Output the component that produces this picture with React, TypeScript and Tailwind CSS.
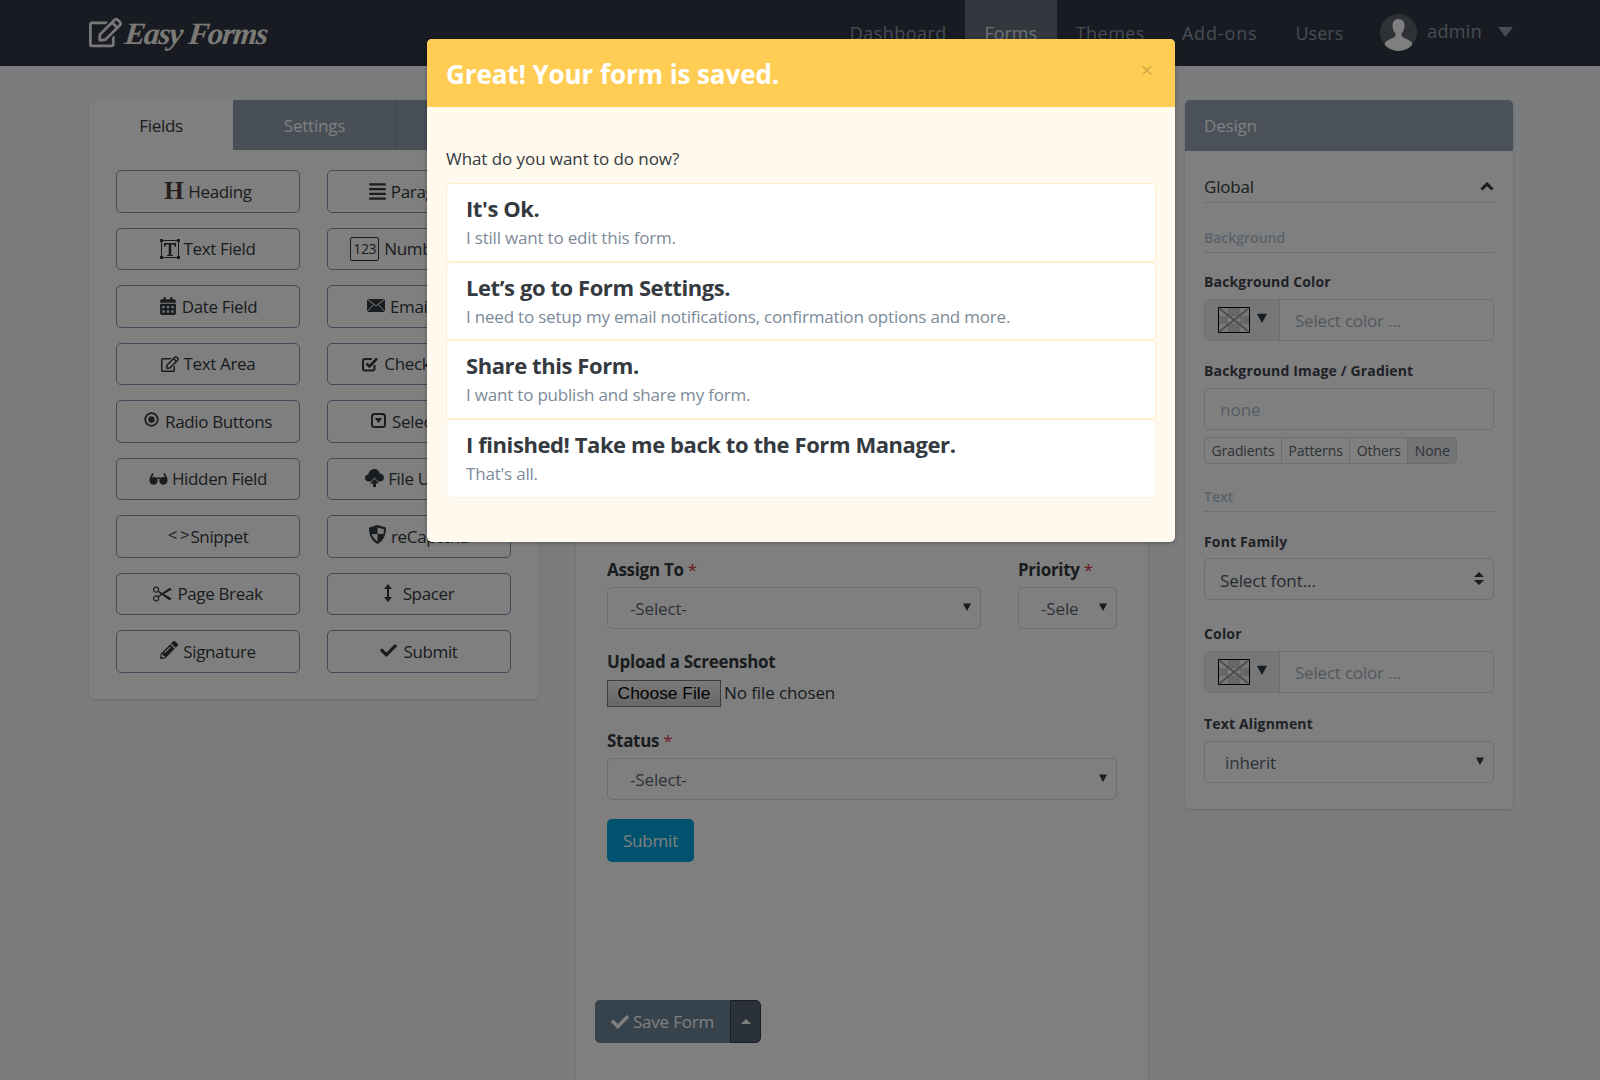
import React from "react";
import {
  FaAlignJustify, FaCalendarAlt, FaRegEdit, FaPencilAlt, FaCheck,
} from "react-icons/fa";
import { BsScissors } from "react-icons/bs";

const TextFieldIcon = () => (
  <svg width="20" height="20" viewBox="0 0 20 20" className="mr-[3px]">
    <rect x="1.5" y="1.5" width="17" height="17" fill="none" stroke="#343a40" strokeWidth="1" />
    <path d="M4 4h12v4h-1.2c-.2-1.6-.8-2.4-2.3-2.4h-1.2v9.4c0 .7.4 1 1.7 1V17H7v-1c1.300 0 1.700-.300 1.700-1V5.600H7.500C6 5.600 5.400 6.400 5.200 8H4z" fill="#343a40" />
    <rect x="0" y="0" width="3" height="3" fill="#343a40" /><rect x="17" y="0" width="3" height="3" fill="#343a40" />
    <rect x="0" y="17" width="3" height="3" fill="#343a40" /><rect x="17" y="17" width="3" height="3" fill="#343a40" />
  </svg>
);

const GlassesIcon = () => (
  <svg width="19" height="13" viewBox="0 0 19 13" className="mr-[4px]">
    <path d="M4 1.500 1 7 M15 1.500 18 7" stroke="#343a40" strokeWidth="1.600" fill="none" />
    <path d="M0.500 8.500c0-2.500 1.800-3.500 4.200-3.500s4 1 4 3.500-1.700 4.200-4 4.200-4.200-1.700-4.200-4.200zM10.300 8.500c0-2.500 1.600-3.500 4-3.500s4.200 1 4.200 3.500-1.900 4.200-4.200 4.200-4-1.700-4-4.200z" fill="#343a40" />
    <path d="M8 6.500c1-.7 2-.7 3 0" stroke="#343a40" strokeWidth="1.500" fill="none" />
  </svg>
);

const ShieldIcon = () => (
  <svg width="17" height="19" viewBox="0 0 17 19" className="mr-[5px] -mt-[3px]">
    <path d="M8.500 0 17 2.500c0 7-2 13-8.500 16.500C2 15.500 0 9.500 0 2.500z" fill="#343a40" />
    <path d="M8.500 2.500v6.500h6c.2-1 .4-2.500.4-4.700zM8.500 9H2.700c.7 2.800 2.500 5.200 5.800 7.400z" fill="#f4f5f6" />
  </svg>
);

const MailIcon = () => (
  <svg width="18" height="13" viewBox="0 0 18 13" className="mr-[5px] -mt-[1px]">
    <rect width="18" height="13" fill="#343a40" />
    <path d="M0 0l9 7 9-7M0 13l6.500-7.500M18 13l-6.500-7.500" stroke="#f4f5f6" strokeWidth="1" fill="none" />
  </svg>
);

const CheckIcon = () => (
  <svg width="17" height="16" viewBox="0 0 17 16" className="mr-[5px]">
    <path d="M12.500 9v3.500a2 2 0 0 1-2 2H3a2 2 0 0 1-2-2V5a2 2 0 0 1 2-2h7" fill="none" stroke="#343a40" strokeWidth="2" />
    <path d="M4.500 7.500 7.500 10.500 15 2.500" fill="none" stroke="#343a40" strokeWidth="2.600" />
  </svg>
);

const SelectIcon = () => (
  <svg width="15" height="15" viewBox="0 0 15 15" className="mr-[6px] -mt-[2px]">
    <rect x="1" y="1" width="13" height="13" rx="2.500" fill="none" stroke="#343a40" strokeWidth="2" />
    <path d="M3.800 5h7.400L7.500 10z" fill="#343a40" />
  </svg>
);

const RadioIcon = () => (
  <svg width="15" height="15" viewBox="0 0 15 15" className="mr-[6px] -mt-[3px]">
    <circle cx="7.500" cy="7.500" r="6.300" fill="none" stroke="#343a40" strokeWidth="1.800" />
    <circle cx="7.500" cy="7.500" r="3.200" fill="#343a40" />
  </svg>
);

const CloudIcon = () => (
  <svg width="19" height="18" viewBox="0 0 19 18" className="mr-[4px] -mt-[1px]">
    <path d="M4 12.500c-2.400 0-4-1.500-4-3.500 0-1.900 1.400-3.300 3.200-3.400C3.800 2.400 6.200 0 9.300 0c2.800 0 5 1.900 5.600 4.500 2.300.2 4.100 1.900 4.100 4.200 0 2.200-1.700 3.800-4 3.800H13L9.500 8.500 6 12.500z" fill="#343a40" />
    <path d="M9.500 9.500 14 14.500h-3V18H8v-3.500H5z" fill="#343a40" />
  </svg>
);

const SpacerIcon = () => (
  <svg width="8" height="18" viewBox="0 0 8 18" className="mr-[11px] -mt-[2px]">
    <path d="M4 0l4 5H5v8h3l-4 5-4-5h3V5H0z" fill="#343a40" />
  </svg>
);

const tools: [React.ReactNode, string][] = [
  [<span className="font-['Liberation_Serif',serif] font-bold text-[25px] leading-none mr-[5px] -mt-[2px] text-[#4a3f38]">H</span>, "Heading"],
  [<FaAlignJustify className="text-[19px] mr-[4px]" />, "Paragraph"],
  [<TextFieldIcon />, "Text Field"],
  [<span className="border border-[#343a40] rounded-[2px] w-[29px] h-[24px] flex items-center justify-center text-[14px] mr-[5px]">123</span>, "Number Field"],
  [<FaCalendarAlt className="text-[18px] mr-[5px]" />, "Date Field"],
  [<MailIcon />, "Email Field"],
  [<FaRegEdit className="text-[18px] mr-[5px]" />, "Text Area"],
  [<CheckIcon />, "Checkboxes"],
  [<RadioIcon />, "Radio Buttons"],
  [<SelectIcon />, "Select List"],
  [<GlassesIcon />, "Hidden Field"],
  [<CloudIcon />, "File Upload"],
  [<span className="text-[17px] leading-none flex gap-[3px] -mt-[3px] mr-[1px]"><span>&lt;</span><span>&gt;</span></span>, "Snippet"],
  [<ShieldIcon />, "reCaptcha"],
  [<BsScissors className="text-[20px] mr-[4px] rotate-90" />, "Page Break"],
  [<SpacerIcon />, "Spacer"],
  [<FaPencilAlt className="text-[18px] mr-[5px] -mt-[2px]" />, "Signature"],
  [<FaCheck className="text-[17px] mr-[6px] -mt-[1px]" />, "Submit"],
];

const Swatch = () => (
  <svg width="32" height="26" viewBox="0 0 32 26" className="block">
    <rect x="0.500" y="0.500" width="31" height="25" fill="#f2f2f2" stroke="#000" />
    <rect x="1" y="9" width="9" height="8" fill="#cfcfcf" /><rect x="22" y="9" width="9" height="8" fill="#cfcfcf" />
    <rect x="10" y="1" width="12" height="8" fill="#cfcfcf" /><rect x="10" y="17" width="12" height="8" fill="#cfcfcf" />
    <path d="M2 2 30 24M30 2 2 24" stroke="#9a9a9a" strokeWidth="2" />
  </svg>
);

const Caret = ({ className = "" }: { className?: string }) => (
  <svg width="8" height="8" viewBox="0 0 8 8" className={className}><path d="M0 0.500h8L4 8z" fill="#343a40" /></svg>
);

const Label = ({ children, req }: { children: React.ReactNode; req?: boolean }) => (
  <div className="text-[17px] font-bold leading-[24px] text-[#343a40] tracking-[-0.3px]">
    {children}{req && <span className="text-[#dc3545] font-normal"> *</span>}
  </div>
);

const SmallLabel = ({ children }: { children: React.ReactNode }) => (
  <div className="text-[14px] font-bold leading-[20px] text-[#3e444e] tracking-[0.15px]">{children}</div>
);

const SelectBox = ({ text, className = "", textClass = "pl-[22px]" }: { text: string; className?: string; textClass?: string }) => (
  <div className={"h-[42px] border border-[#d6dadd] rounded-[5px] flex items-center justify-between pr-[9px] text-[17px] text-[#5c6670] " + className}>
    <span className={textClass + " pt-[2px] tracking-[-0.15px]"}>{text}</span>
    <Caret className="-mt-[2px]" />
  </div>
);

const ColorInput = () => (
  <div className="h-[42px] border border-[#d6dadd] rounded-[5px] flex items-center overflow-hidden">
    <div className="w-[75px] h-full bg-[#eceef0] border-r border-[#d6dadd] flex items-center pl-[13px] gap-[7px] shrink-0">
      <div className="-mt-[1px]"><Swatch /></div>
      <Caret className="w-[10px] h-[10px] -mt-[4px]" />
    </div>
    <div className="pl-[15px] pt-[2px] text-[17px] text-[#a4b2c0] tracking-[-0.2px]">Select color ...</div>
  </div>
);

const SectionHead = ({ children, className = "" }: { children: React.ReactNode; className?: string }) => (
  <div className={"border-b border-[#dce2e6] text-[14px] font-semibold text-[#b4c6d6] leading-[20px] pb-[4px] " + className}>{children}</div>
);

const items = [
  ["It's Ok.", "I still want to edit this form."],
  ["Let’s go to Form Settings.", "I need to setup my email notifications, confirmation options and more."],
  ["Share this Form.", "I want to publish and share my form."],
  ["I finished! Take me back to the Form Manager.", "That's all."],
];

export default function App() {
  return (
    <div className="relative h-[1080px] w-full overflow-hidden bg-[#f6f8fa] font-['Open_Sans','Noto_Sans',sans-serif] text-[#343a40]">
      <header className="h-[66px] bg-[#303844] relative">
        <div className="pl-[88px] pr-[87px] h-full flex items-center justify-between">
          <div className="flex items-center text-white">
            <FaRegEdit className="text-[33px] ml-[1px] mr-[3px] -mt-[1px] text-[#eeeeee]" />
            <span className="font-['Liberation_Serif',serif] italic font-bold text-[31px] -skew-x-6 tracking-[-1.2px] leading-none text-[#f6f4ee]">Easy Forms</span>
          </div>
          <nav className="flex items-center h-full text-[18px] text-[#8e9aaa]">
            <span className="mr-[18px] mt-[1px] tracking-[0.45px]">Dashboard</span>
            <span className="h-full w-[92px] bg-[#64707c] text-[#dce4ea] flex items-center justify-center pt-[1px]">Forms</span>
            <span className="ml-[19px] mt-[1px] tracking-[0.45px]">Themes</span>
            <span className="ml-[37px] mt-[1px] tracking-[0.85px]">Add-ons</span>
            <span className="ml-[38px] mt-[1px]">Users</span>
            <svg width="37" height="37" viewBox="0 0 37 37" className="ml-[37px] mb-[1px]">
              <circle cx="18.500" cy="18.500" r="18.500" fill="#5c646c" />
              <clipPath id="av"><circle cx="18.500" cy="18.500" r="18.500" /></clipPath>
              <g clipPath="url(#av)" fill="#fff">
                <path d="M18.500 5c-4 0-6 2.800-6 6.500 0 3 1.200 6 2.700 7.800.6.900.5 2.700-.2 3.400-2 1.700-8 3-10 6v9h27v-9c-2-3-8-4.300-10-6-.7-.7-.8-2.500-.2-3.400 1.500-1.800 2.700-4.800 2.700-7.800C24.500 7.800 22.500 5 18.500 5z" />
              </g>
            </svg>
            <span className="ml-[10px] -mt-[3px] tracking-[0.3px]">admin</span>
            <svg width="15" height="10" viewBox="0 0 15 10" className="ml-[16px] -mt-[3px]"><path d="M0 0h15L7.500 10z" fill="#8e9aaa" /></svg>
          </nav>
        </div>
      </header>

      <main className="pl-[89px] pt-[34px] flex items-start gap-[37px]">
        <section className="w-[450px] shrink-0 bg-white rounded-[5px] shadow-[0_1px_3px_rgba(0,0,0,0.15)] overflow-hidden">
          <div className="flex h-[50px] text-[17px]">
            <div className="w-[144px] pt-[2px] flex items-center justify-center tracking-[-0.3px]">Fields</div>
            <div className="w-[164px] pt-[2px] bg-[#909eae] border-r border-[#7c8a9a] text-white flex items-center justify-center tracking-[-0.2px]">Settings</div>
            <div className="flex-1 bg-[#909eae]" />
          </div>
          <div className="pl-[27px] pr-[28px] pt-[20px] pb-[26px] grid grid-cols-2 gap-x-[27px] gap-y-[15px]">
            {tools.map(([icon, name]) => (
              <div key={name} className="h-[42.5px] border border-[#7c94b0] rounded-[5px] flex items-center justify-center text-[17px] tracking-[-0.35px] whitespace-nowrap">
                {icon}<span>{name}</span>
              </div>
            ))}
          </div>
        </section>

        <section className="w-[572px] shrink-0 h-[1100px] bg-white shadow-[0_1px_3px_rgba(0,0,0,0.15)] pl-[19px] pr-[19px] pt-[458px]">
          <div className="px-[12px]">
            <div className="flex gap-[37px]">
              <div className="w-[374px]">
                <Label req>Assign To</Label>
                <SelectBox text="-Select-" className="mt-[5px]" />
              </div>
              <div className="w-[99px]">
                <Label req>Priority</Label>
                <SelectBox text="-Sele" className="mt-[5px]" />
              </div>
            </div>
            <div className="mt-[21px]"><Label>Upload a Screenshot</Label></div>
            <div className="flex items-center mt-[6px] text-[17px] tracking-[-0.1px]">
              <span className="h-[27px] w-[114px] border border-[#767676] bg-gradient-to-b from-[#f4f4f4] to-[#cfcfcf] flex items-center justify-center font-['Liberation_Sans',sans-serif] text-[17.400px] tracking-normal text-black">Choose File</span>
              <span className="ml-[3px] -mt-[1px]">No file chosen</span>
            </div>
            <div className="mt-[22px]"><Label req>Status</Label></div>
            <SelectBox text="-Select-" className="mt-[5px]" />
            <div className="mt-[19px] w-[87px] h-[43px] rounded-[5px] bg-[#00a4dc] text-white flex items-center justify-center text-[17px] tracking-[-0.2px]">Submit</div>
          </div>
          <div className="mt-[138px] flex w-[166px] h-[43px] rounded-[5px] overflow-hidden text-white text-[17px]">
            <div className="w-[135px] bg-[#6c8498] flex items-center justify-center tracking-[-0.2px]"><FaCheck className="mr-[4px] text-[18px]" />Save Form</div>
            <div className="flex-1 bg-[#566270] border border-[#343e4a] flex items-center justify-center rounded-r-[5px]">
              <svg width="10" height="5" viewBox="0 0 10 5"><path d="M5 0l5 5H0z" fill="#fff" /></svg>
            </div>
          </div>
        </section>

        <aside className="w-[328px] shrink-0 bg-white rounded-[5px] shadow-[0_1px_3px_rgba(0,0,0,0.15)] overflow-hidden">
          <div className="h-[51px] pt-[1px] bg-[#94a2b2] text-white text-[17px] flex items-center px-[19px] tracking-[-0.2px]">Design</div>
          <div className="px-[19px] pt-[22px] pb-[26px]">
            <div className="flex items-center justify-between border-b border-[#dce2e6] h-[30px] pb-[2px] text-[17px] tracking-[-0.2px]">
              <span>Global</span>
              <svg width="14" height="9" viewBox="0 0 14 9"><path d="M1.500 7.500 7 2l5.500 5.500" fill="none" stroke="#343a40" strokeWidth="3" /></svg>
            </div>
            <SectionHead className="mt-[25px]">Background</SectionHead>
            <div className="mt-[19px]"><SmallLabel>Background Color</SmallLabel></div>
            <div className="mt-[7px]"><ColorInput /></div>
            <div className="mt-[20px]"><SmallLabel>Background Image / Gradient</SmallLabel></div>
            <div className="mt-[7px] h-[42px] border border-[#d6dadd] rounded-[5px] flex items-center pl-[15px] pt-[2px] text-[17px] text-[#acbccc]">none</div>
            <div className="mt-[7px] flex w-fit h-[27px] border border-[#d6dadd] rounded-[4px] text-[14px] tracking-[-0.1px] text-[#5c6670] overflow-hidden">
              <span className="px-[6.500px] flex items-center border-r border-[#d6dadd]">Gradients</span>
              <span className="px-[6.500px] flex items-center border-r border-[#d6dadd]">Patterns</span>
              <span className="px-[6.500px] flex items-center border-r border-[#d6dadd]">Others</span>
              <span className="px-[6.500px] flex items-center bg-[#e8eaec]">None</span>
            </div>
            <SectionHead className="mt-[23px]">Text</SectionHead>
            <div className="mt-[20px]"><SmallLabel>Font Family</SmallLabel></div>
            <div className="mt-[6px] h-[42px] border border-[#d6dadd] rounded-[5px] flex items-center justify-between pl-[15px] pr-[9px] text-[17px] text-[#4c5560] tracking-[-0.1px]">
              <span className="pt-[3px]">Select font...</span>
              <svg width="10" height="13" viewBox="0 0 10 13" className="-mt-[2px]"><path d="M5 0l5 5H0zM0 8h10l-5 5z" fill="#343a40" /></svg>
            </div>
            <div className="mt-[24px]"><SmallLabel>Color</SmallLabel></div>
            <div className="mt-[7px]"><ColorInput /></div>
            <div className="mt-[21px]"><SmallLabel>Text Alignment</SmallLabel></div>
            <SelectBox text="inherit" className="mt-[7px]" textClass="pl-[20px]" />
          </div>
        </aside>
      </main>

      <div className="absolute inset-0 bg-black/50" />

      <div className="absolute left-[427px] top-[39px] w-[748px] rounded-[5px] bg-[#fff9ee] overflow-hidden shadow-[0_1px_4px_rgba(0,0,0,0.3)]">
        <div className="h-[68px] bg-[#ffcd54] flex items-center justify-between pl-[19px] pr-[22px] text-white">
          <span className="text-[26px] font-bold tracking-[-0.1px] pt-[2px]">Great! Your form is saved.</span>
          <span className="text-[22px] text-[#d4ab48] -mt-[9px] leading-none">×</span>
        </div>
        <div className="px-[19px] pt-[40px] pb-[44px]">
          <div className="text-[17px] leading-[24px] text-[#343a40] tracking-[-0.07px] mb-[12px]">What do you want to do now?</div>
          {items.map(([t, s], i) => (
            <div key={t} className={"h-[78.670px] bg-white border rounded-[4px] px-[19px] pt-[9px] " + (i === 3 ? "border-[#fbf4e6] border-t-[#ffeec8]" : "border-[#ffeec8]")}>
              <div className="text-[22px] font-bold leading-[31px] tracking-[-0.42px]">{t}</div>
              <div className="text-[17px] leading-[24px] mt-[2px] text-[#7c8a99] tracking-[-0.2px]">{s}</div>
            </div>
          ))}
        </div>
      </div>
    </div>
  );
}
